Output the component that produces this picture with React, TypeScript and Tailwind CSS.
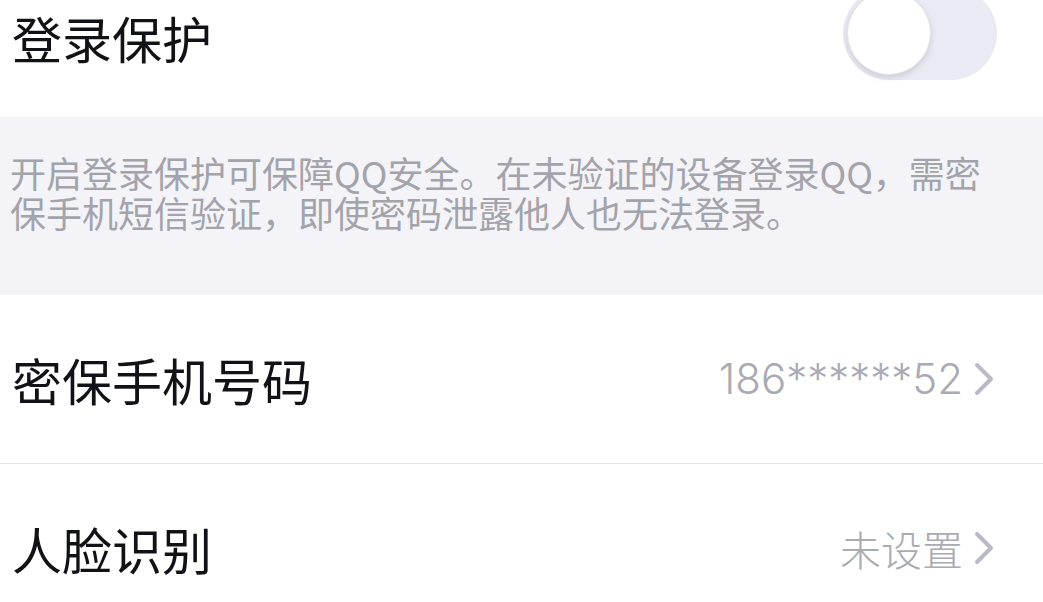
const font = {
  fontFamily: '"Noto Sans CJK SC", "Noto Sans", sans-serif',
};

const numFont = {
  fontFamily: 'Inter, "Noto Sans CJK SC", sans-serif',
};

function Chevron() {
  return (
    <svg width="22" height="34" viewBox="0 0 22 34" className="ml-[10px] shrink-0">
      <path
        d="M4 3 L18 17 L4 31"
        fill="none"
        stroke="#b9bac3"
        strokeWidth="4"
        strokeLinecap="round"
        strokeLinejoin="round"
      />
    </svg>
  );
}

function Toggle() {
  return (
    <div className="relative mb-[6px] h-[93px] w-[154px] shrink-0 rounded-full bg-[#e9eaf3]">
      <div className="absolute left-[4px] top-[4px] h-[84px] w-[84px] rounded-full border border-[#e4e4ea] bg-white shadow-[0_3px_6px_rgba(0,0,0,0.12)]" />
    </div>
  );
}

function Row({ label, value, numeric }: { label: string; value: string; numeric?: boolean }) {
  return (
    <div className="flex h-[168px] items-center justify-between pl-[12px] pr-[48px]">
      <span className="text-[50px] leading-none text-[#111118]">{label}</span>
      <div className="flex items-center">
        <span
          className={numeric ? "text-[42px] font-light leading-none text-[#a9aab3]" : "text-[41px] font-light leading-none text-[#a9aab3]"}
          style={numeric ? numFont : undefined}
        >
          {value}
        </span>
        <Chevron />
      </div>
    </div>
  );
}

export default function App() {
  return (
    <div className="h-[602px] w-[1043px] overflow-hidden bg-white" style={font}>
      {/* Login protection toggle */}
      <div className="flex h-[117px] items-center justify-between pb-[44px] pl-[12px] pr-[46px]">
        <span className="text-[50px] leading-none text-[#111118]">登录保护</span>
        <Toggle />
      </div>
      {/* Explanation */}
      <div className="h-[178px] bg-[#f4f4f8] pl-[10px] pr-[50px] pt-[35px]">
        <p className="text-[36px] leading-[40px] text-[#a3a3ab]">
          开启登录保护可保障QQ安全。在未验证的设备登录QQ，需密保手机短信验证，即使密码泄露他人也无法登录。
        </p>
      </div>
      <Row label="密保手机号码" value="186******52" numeric />
      <div className="h-px bg-[#e6e6ea]" />
      <Row label="人脸识别" value="未设置" />
    </div>
  );
}
